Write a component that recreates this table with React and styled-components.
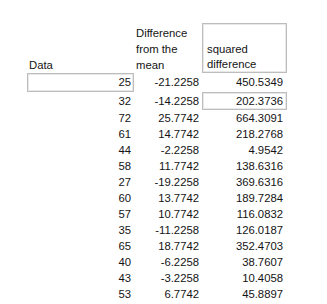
import React from 'react';
import styled, {createGlobalStyle} from 'styled-components';

const GlobalStyle = createGlobalStyle`
  html, body {
    margin: 0;
    padding: 0;
    background: #ffffff;
  }

  body {
    font-family: "Liberation Sans", Arial, sans-serif;
    font-size: 11.3px;
    color: #141414;
  }
`

const Sheet = styled.div`
  display: grid;
  grid-template-columns: 107px 68px 85px;
  margin: 23px 0 0 27px;
`

const HeaderCell = styled.div`
  height: 50px;
  box-sizing: border-box;
  display: flex;
  flex-direction: column;
  justify-content: flex-end;
  line-height: ${p => p.$boxed ? 15 : 16}px;
  padding-left: ${p => p.$indent}px;
  border: ${p => p.$boxed ? '1px solid #bdbdbd' : 'none'};
  box-shadow: ${p => p.$boxed ? 'inset 0 0 0 1px #e8e8e8' : 'none'};
`

const Cell = styled.div`
  height: ${p => p.$height}px;
  line-height: ${p => p.$height - 2}px;
  box-sizing: border-box;
  text-align: right;
  padding-right: ${p => p.$pad}px;
  white-space: nowrap;
  border: ${p => p.$boxed ? '1px solid #bdbdbd' : '1px solid transparent'};
  box-shadow: ${p => p.$boxed ? 'inset 0 0 0 1px #e8e8e8' : 'none'};
`

const rows = [
    ['25', '-21.2258', '450.5349'],
    ['32', '-14.2258', '202.3736'],
    ['72', '25.7742', '664.3091'],
    ['61', '14.7742', '218.2768'],
    ['44', '-2.2258', '4.9542'],
    ['58', '11.7742', '138.6316'],
    ['27', '-19.2258', '369.6316'],
    ['60', '13.7742', '189.7284'],
    ['57', '10.7742', '116.0832'],
    ['35', '-11.2258', '126.0187'],
    ['65', '18.7742', '352.4703'],
    ['40', '-6.2258', '38.7607'],
    ['43', '-3.2258', '10.4058'],
    ['53', '6.7742', '45.8897'],
];

const rowHeight = i => i === 0 ? 19 : i === 1 ? 18 : 16;

const App = () => (
    <>
        <GlobalStyle/>
        <Sheet>
            <HeaderCell $indent={2}>Data</HeaderCell>
            <HeaderCell $indent={2}>
                <span>Difference</span>
                <span>from the</span>
                <span>mean</span>
            </HeaderCell>
            <HeaderCell $indent={4} $boxed>
                <span>squared</span>
                <span>difference</span>
            </HeaderCell>
            {rows.map((row, i) => (
                <React.Fragment key={i}>
                    <Cell $height={rowHeight(i)} $pad={2} $boxed={i === 0}>{row[0]}</Cell>
                    <Cell $height={rowHeight(i)} $pad={2}>{row[1]}</Cell>
                    <Cell $height={rowHeight(i)} $pad={3} $boxed={i === 1}>{row[2]}</Cell>
                </React.Fragment>
            ))}
        </Sheet>
    </>
);

export default App;
